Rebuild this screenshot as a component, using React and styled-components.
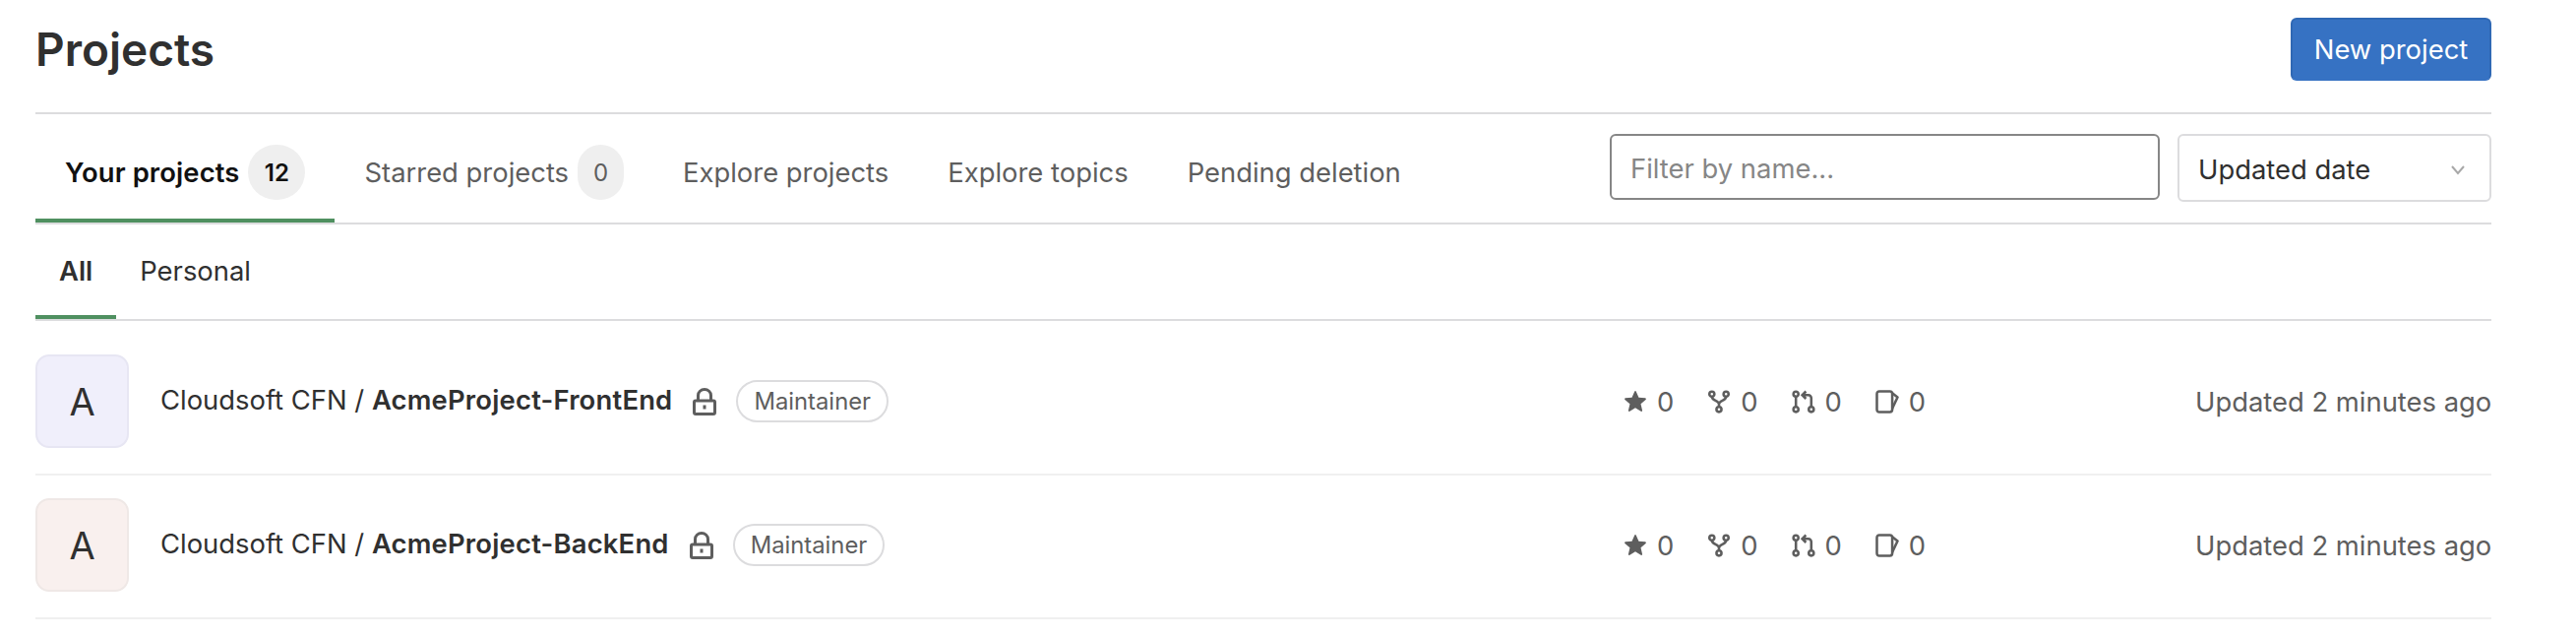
import React from "react";
import styled, { createGlobalStyle } from "styled-components";

const GlobalStyle = createGlobalStyle`
  body {
    margin: 0;
    background: #fff;
    color: #303030;
    font-family: Inter, "Noto Sans", "Liberation Sans", sans-serif;
    font-size: 27.4px;
  }
`;

const Page = styled.div`
  padding: 0 86px 0 36px;
`;

const Header = styled.header`
  display: flex;
  justify-content: space-between;
  align-items: flex-start;
  height: 96px;
  padding-top: 18px;
  border-bottom: 2px solid #dcdcde;
`;

const Title = styled.h1`
  margin: 0;
  font-size: 46px;
  line-height: 64px;
  font-weight: 600;
  color: #303030;
`;

const PrimaryButton = styled.button`
  height: 64px;
  width: 204px;
  padding: 0;
  border: 2px solid #2f68b4;
  border-bottom-color: #3672c3;
  border-radius: 6px;
  background: #3672c3;
  color: #fff;
  font: inherit;
`;

const TabsBar = styled.div`
  display: flex;
  justify-content: space-between;
  height: 110px;
  border-bottom: 2px solid #dcdcde;
`;

const TabList = styled.nav`
  display: flex;
`;

const Tab = styled.a`
  display: flex;
  align-items: center;
  gap: 9px;
  padding: 12px 30px 0;
  height: 110px;
  box-sizing: border-box;
  border-bottom: 4px solid ${(p) => (p.$active ? "#4f9060" : "transparent")};
  color: ${(p) => (p.$active ? "#111" : "#5e5e5e")};
  font-weight: ${(p) => (p.$active ? 600 : 400)};
  letter-spacing: ${(p) => (p.$active ? "0.12px" : "0")};
  white-space: nowrap;
`;

const CountBadge = styled.span`
  display: flex;
  align-items: center;
  justify-content: center;
  width: ${(p) => p.$width}px;
  height: 56px;
  border-radius: 28px;
  background: #efefef;
  font-size: 24px;
  color: ${(p) => (p.$active ? "#111" : "#5e5e5e")};
`;

const Filters = styled.div`
  display: flex;
  gap: 18px;
  padding-top: 20px;
`;

const FilterInput = styled.input`
  width: 559px;
  height: 67px;
  box-sizing: border-box;
  padding: 2px 20px 0 19px;
  border: 2px solid #868686;
  border-radius: 6px;
  font: inherit;
  outline: none;
  &::placeholder {
    color: #868686;
    opacity: 1;
  }
`;

const SortSelect = styled.div`
  display: flex;
  align-items: center;
  justify-content: space-between;
  width: 319px;
  height: 69px;
  box-sizing: border-box;
  padding: 2px 24px 0 19px;
  border: 2px solid #dcdcde;
  border-radius: 6px;
  color: #303030;
`;

const SubTabs = styled.nav`
  display: flex;
  height: 96px;
  border-bottom: 2px solid #dcdcde;
`;

const SubTab = styled.a`
  display: flex;
  align-items: center;
  padding: 2px 24px 0;
  box-sizing: border-box;
  height: 96px;
  border-bottom: 4px solid ${(p) => (p.$active ? "#4f9060" : "transparent")};
  font-weight: ${(p) => (p.$active ? 600 : 400)};
  color: #303030;
`;

const List = styled.ul`
  list-style: none;
  margin: 11px 0 0;
  padding: 0;
`;

const Row = styled.li`
  display: grid;
  grid-template-columns: 95px 1fr 581px 301px;
  align-items: center;
  padding: 23px 0 26px;
  border-bottom: 2px solid #f0f0f0;
`;

const Avatar = styled.div`
  display: flex;
  align-items: center;
  justify-content: center;
  width: 95px;
  height: 95px;
  box-sizing: border-box;
  border: 2px solid ${(p) => p.$border};
  border-radius: 14px;
  background: ${(p) => p.$bg};
  font-size: 38px;
  color: #303030;
`;

const Main = styled.div`
  display: flex;
  align-items: center;
  margin-left: 32px;
`;

const Name = styled.a`
  color: #303030;
  margin-top: -3px;
  white-space: nowrap;
  b {
    font-weight: 600;
    letter-spacing: 0.2px;
  }
`;

const LockIcon = styled.svg`
  width: 24px;
  height: 28px;
  margin: 0 20px 0 21px;
  color: #5e5e5e;
`;

const RoleBadge = styled.span`
  display: flex;
  align-items: center;
  height: 43px;
  padding: 0 16px;
  box-sizing: border-box;
  border: 2px solid #dcdcde;
  border-radius: 22px;
  font-size: 23.8px;
  color: #5e5e5e;
`;

const Stats = styled.div`
  display: flex;
  gap: 34px;
`;

const Stat = styled.span`
  display: flex;
  align-items: center;
  gap: 10px;
  color: #5e5e5e;
  svg {
    width: 24px;
    height: 24px;
  }
`;

const Updated = styled.span`
  text-align: right;
  color: #5e5e5e;
  white-space: nowrap;
`;

const Star = () => (
  <svg viewBox="0 0 16 16" fill="currentColor">
    <path d="M7.45 1.1a.6.6 0 0 1 1.1 0l1.75 4.1 4.4.38a.6.6 0 0 1 .34 1.05l-3.35 2.9 1 4.35a.6.6 0 0 1-.9.64L8 12.2l-3.8 2.32a.6.6 0 0 1-.9-.64l1-4.35L.95 6.63a.6.6 0 0 1 .34-1.05l4.4-.38z" />
  </svg>
);

const Fork = () => (
  <svg viewBox="0 0 16 16" fill="none" stroke="currentColor" strokeWidth="1.7">
    <circle cx="3.2" cy="2.8" r="1.7" />
    <circle cx="12.8" cy="2.8" r="1.7" />
    <circle cx="8" cy="13.2" r="1.7" />
    <path d="M3.2 4.5c0 3.2 4.8 2.2 4.8 5.2v1.8M12.8 4.5c0 3.2-4.8 2.2-4.8 5.2" />
  </svg>
);

const MergeRequest = () => (
  <svg viewBox="0 0 16 16" fill="none" stroke="currentColor" strokeWidth="1.7">
    <circle cx="2.8" cy="2.8" r="1.7" />
    <circle cx="2.8" cy="13.2" r="1.7" />
    <circle cx="13.2" cy="13.2" r="1.7" />
    <path d="M2.8 4.5v7M13.2 11.5V5.5a2 2 0 0 0-2-2H7.6M9.6 1 7.1 3.5 9.6 6" />
  </svg>
);

const Issue = () => (
  <svg viewBox="0 0 16 16" fill="none" stroke="currentColor" strokeWidth="1.7" strokeLinejoin="round">
    <rect x="1" y="1" width="10.4" height="14" rx="1.6" />
    <path d="M11.4 2.2 15 5l-3.6 7.6" />
  </svg>
);

const Lock = () => (
  <LockIcon viewBox="0 0 24 28" fill="none" stroke="currentColor" strokeWidth="3">
    <path d="M5.5 13V7.5a6.5 6 0 0 1 13 0V13" />
    <rect x="1.5" y="13" width="21" height="13.5" rx="1.5" />
    <rect x="10.5" y="17.5" width="3" height="4" fill="currentColor" stroke="none" />
  </LockIcon>
);

const Chevron = () => (
  <svg width="16" height="16" viewBox="0 0 16 16" fill="none" stroke="#a8a8a8" strokeWidth="2">
    <path d="M2 5l6 7 6-7" />
  </svg>
);

const projects = [
  { name: "AcmeProject-FrontEnd", bg: "#f0effb", border: "#e7e6f3" },
  { name: "AcmeProject-BackEnd", bg: "#f9f0ee", border: "#efe8e6" },
];

const App = () => {
  return (
    <Page>
      <GlobalStyle />
      <Header>
        <Title>Projects</Title>
        <PrimaryButton>New project</PrimaryButton>
      </Header>
      <TabsBar>
        <TabList>
          <Tab $active>
            Your projects
            <CountBadge $active $width={58}>12</CountBadge>
          </Tab>
          <Tab>
            Starred projects
            <CountBadge $width={47}>0</CountBadge>
          </Tab>
          <Tab>Explore projects</Tab>
          <Tab>Explore topics</Tab>
          <Tab>Pending deletion</Tab>
        </TabList>
        <Filters>
          <FilterInput placeholder="Filter by name..." />
          <SortSelect>
            Updated date
            <Chevron />
          </SortSelect>
        </Filters>
      </TabsBar>
      <SubTabs>
        <SubTab $active>All</SubTab>
        <SubTab>Personal</SubTab>
      </SubTabs>
      <List>
        {projects.map((project) => (
          <Row key={project.name}>
            <Avatar $bg={project.bg} $border={project.border}>A</Avatar>
            <Main>
              <Name>
                Cloudsoft CFN / <b>{project.name}</b>
              </Name>
              <Lock />
              <RoleBadge>Maintainer</RoleBadge>
            </Main>
            <Stats>
              <Stat><Star />0</Stat>
              <Stat><Fork />0</Stat>
              <Stat><MergeRequest />0</Stat>
              <Stat><Issue />0</Stat>
            </Stats>
            <Updated>Updated 2 minutes ago</Updated>
          </Row>
        ))}
      </List>
    </Page>
  );
};

export default App;
